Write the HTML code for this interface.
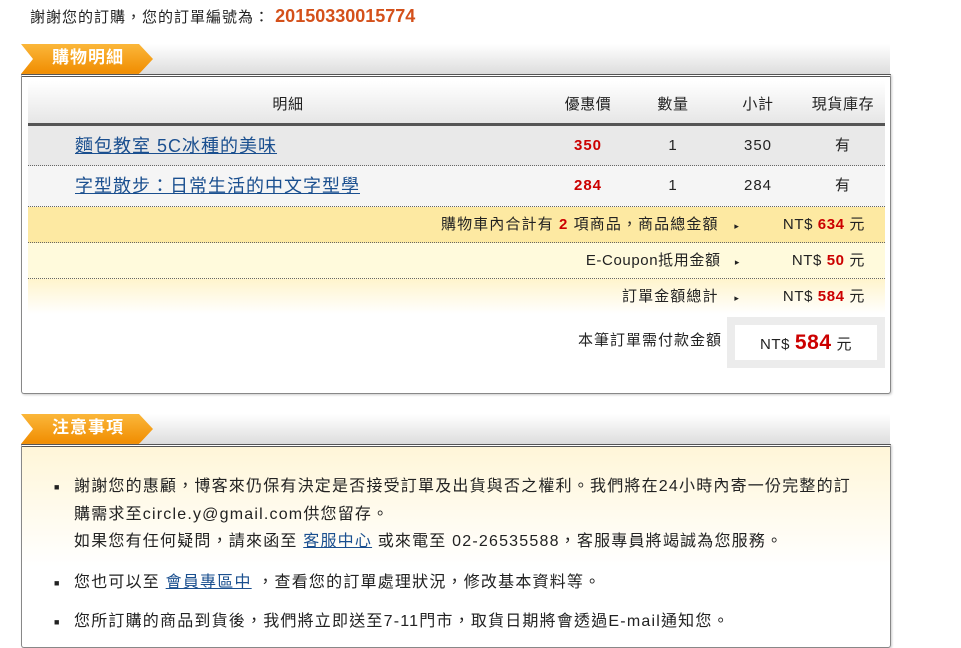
<!DOCTYPE html><html><head><meta charset="utf-8"><style>
body{margin:0;background:#fff;font-family:"Liberation Sans","Noto Sans CJK TC",sans-serif;font-size:15px;color:#222;width:961px;height:628px;overflow:hidden;position:relative;letter-spacing:0.6px}
.a{position:absolute}
.tab{position:absolute;left:21px;width:132px;height:30px;background:linear-gradient(#fbb73a,#f08c00);clip-path:polygon(0 0,118px 0,132px 15px,118px 30px,0 30px,12px 15px);color:#fff;font-weight:bold;font-size:17px;line-height:28px;padding-left:31px;box-sizing:border-box;letter-spacing:1px}
.bar{position:absolute;left:140px;width:750px;height:30px;background:linear-gradient(#fff,#ddd)}
.box{position:absolute;left:21px;width:868px;border:1px solid #888;border-top:3px double #555;border-radius:0 0 3px 3px;box-shadow:1px 1px 2px #ccc}
.row{position:absolute;left:6px;width:857px}
.dot{border-bottom:1px dotted #666}
.red{color:#c00;font-weight:bold}
a{color:#1a4f8f;text-decoration:underline}
.c{position:absolute;text-align:center}
</style></head><body>
<div class="a" style="left:30px;top:6px;font-size:15px;letter-spacing:1px">謝謝您的訂購，您的訂單編號為： <span style="color:#d4501a;font-weight:bold;font-size:18px;letter-spacing:0">20150330015774</span></div>
<div class="bar" style="top:44px"></div><div class="tab" style="top:44px">購物明細</div>
<div class="box" style="top:74px;height:316px">
<div class="row" style="top:4px;height:42px;background:linear-gradient(#fff,#e6e6e6);border-bottom:3px solid #555;line-height:48px">
<span class="c" style="left:220px;width:80px">明細</span><span class="c" style="left:520px;width:80px">優惠價</span><span class="c" style="left:605px;width:80px">數量</span><span class="c" style="left:690px;width:80px">小計</span><span class="c" style="left:775px;width:80px">現貨庫存</span></div>
<div class="row dot" style="top:49px;height:39px;background:#e9e9e9;line-height:40px;font-size:18px;letter-spacing:1px">
<a class="a" style="left:47px;top:0">麵包教室 5C冰種的美味</a><span class="c red" style="left:520px;width:80px;font-size:15px">350</span><span class="c" style="left:605px;width:80px;font-size:15px">1</span><span class="c" style="left:690px;width:80px;font-size:15px">350</span><span class="c" style="left:775px;width:80px;font-size:15px">有</span></div>
<div class="row dot" style="top:89px;height:40px;background:#f5f5f5;line-height:40px;font-size:18px;letter-spacing:1px">
<a class="a" style="left:47px;top:0">字型散步：日常生活的中文字型學</a><span class="c red" style="left:520px;width:80px;font-size:15px">284</span><span class="c" style="left:605px;width:80px;font-size:15px">1</span><span class="c" style="left:690px;width:80px;font-size:15px">284</span><span class="c" style="left:775px;width:80px;font-size:15px">有</span></div>
<div class="row dot" style="top:130px;height:35px;background:#fde9a2;line-height:36px">
<span class="a" style="right:145px;letter-spacing:1.1px">購物車內合計有 <span class="red">2</span> 項商品，商品總金額 &nbsp;&nbsp;<span style="font-size:9px">▸</span></span><span class="a" style="right:20px">NT$ <span class="red">634</span> 元</span></div>
<div class="row dot" style="top:166px;height:35px;background:#fffadc;line-height:36px">
<span class="a" style="right:145px">E-Coupon抵用金額 &nbsp;&nbsp;<span style="font-size:9px">▸</span></span><span class="a" style="right:20px">NT$ <span class="red">50</span> 元</span></div>
<div class="row" style="top:202px;height:35px;background:linear-gradient(#fff4cc,#fff);line-height:36px">
<span class="a" style="right:145px;letter-spacing:1.1px">訂單金額總計 &nbsp;&nbsp;<span style="font-size:9px">▸</span></span><span class="a" style="right:20px">NT$ <span class="red">584</span> 元</span></div>
<div class="a" style="left:556px;top:252px;letter-spacing:1px">本筆訂單需付款金額</div>
<div class="a" style="left:705px;top:240px;width:158px;height:51px;background:#ececec"><div class="a" style="left:8px;top:8px;width:142px;height:35px;background:#fff;line-height:36px;text-align:center">NT$ <span class="red" style="font-size:21px">584</span> 元</div></div>
</div>
<div class="bar" style="top:414px"></div><div class="tab" style="top:414px">注意事項</div>
<div class="box" style="top:444px;height:200px;background:linear-gradient(#fff6d8,#fff 60%)">
<div class="a" style="left:30px;top:26px;line-height:27.5px;width:800px;font-size:16px;letter-spacing:1.2px">
<div style="position:relative;padding-left:22px"><span class="a" style="left:2px;top:1px;font-size:9px">■</span>謝謝您的惠顧，博客來仍保有決定是否接受訂單及出貨與否之權利。我們將在24小時內寄一份完整的訂購需求至circle.y@gmail.com供您留存。<br>如果您有任何疑問，請來函至 <a>客服中心</a> 或來電至 02-26535588，客服專員將竭誠為您服務。</div>
<div style="position:relative;padding-left:22px;margin-top:13px"><span class="a" style="left:2px;top:1px;font-size:9px">■</span>您也可以至 <a>會員專區中</a> ，查看您的訂單處理狀況，修改基本資料等。</div>
<div style="position:relative;padding-left:22px;margin-top:12px"><span class="a" style="left:2px;top:1px;font-size:9px">■</span>您所訂購的商品到貨後，我們將立即送至7-11門市，取貨日期將會透過E-mail通知您。</div>
</div></div>
</body></html>
